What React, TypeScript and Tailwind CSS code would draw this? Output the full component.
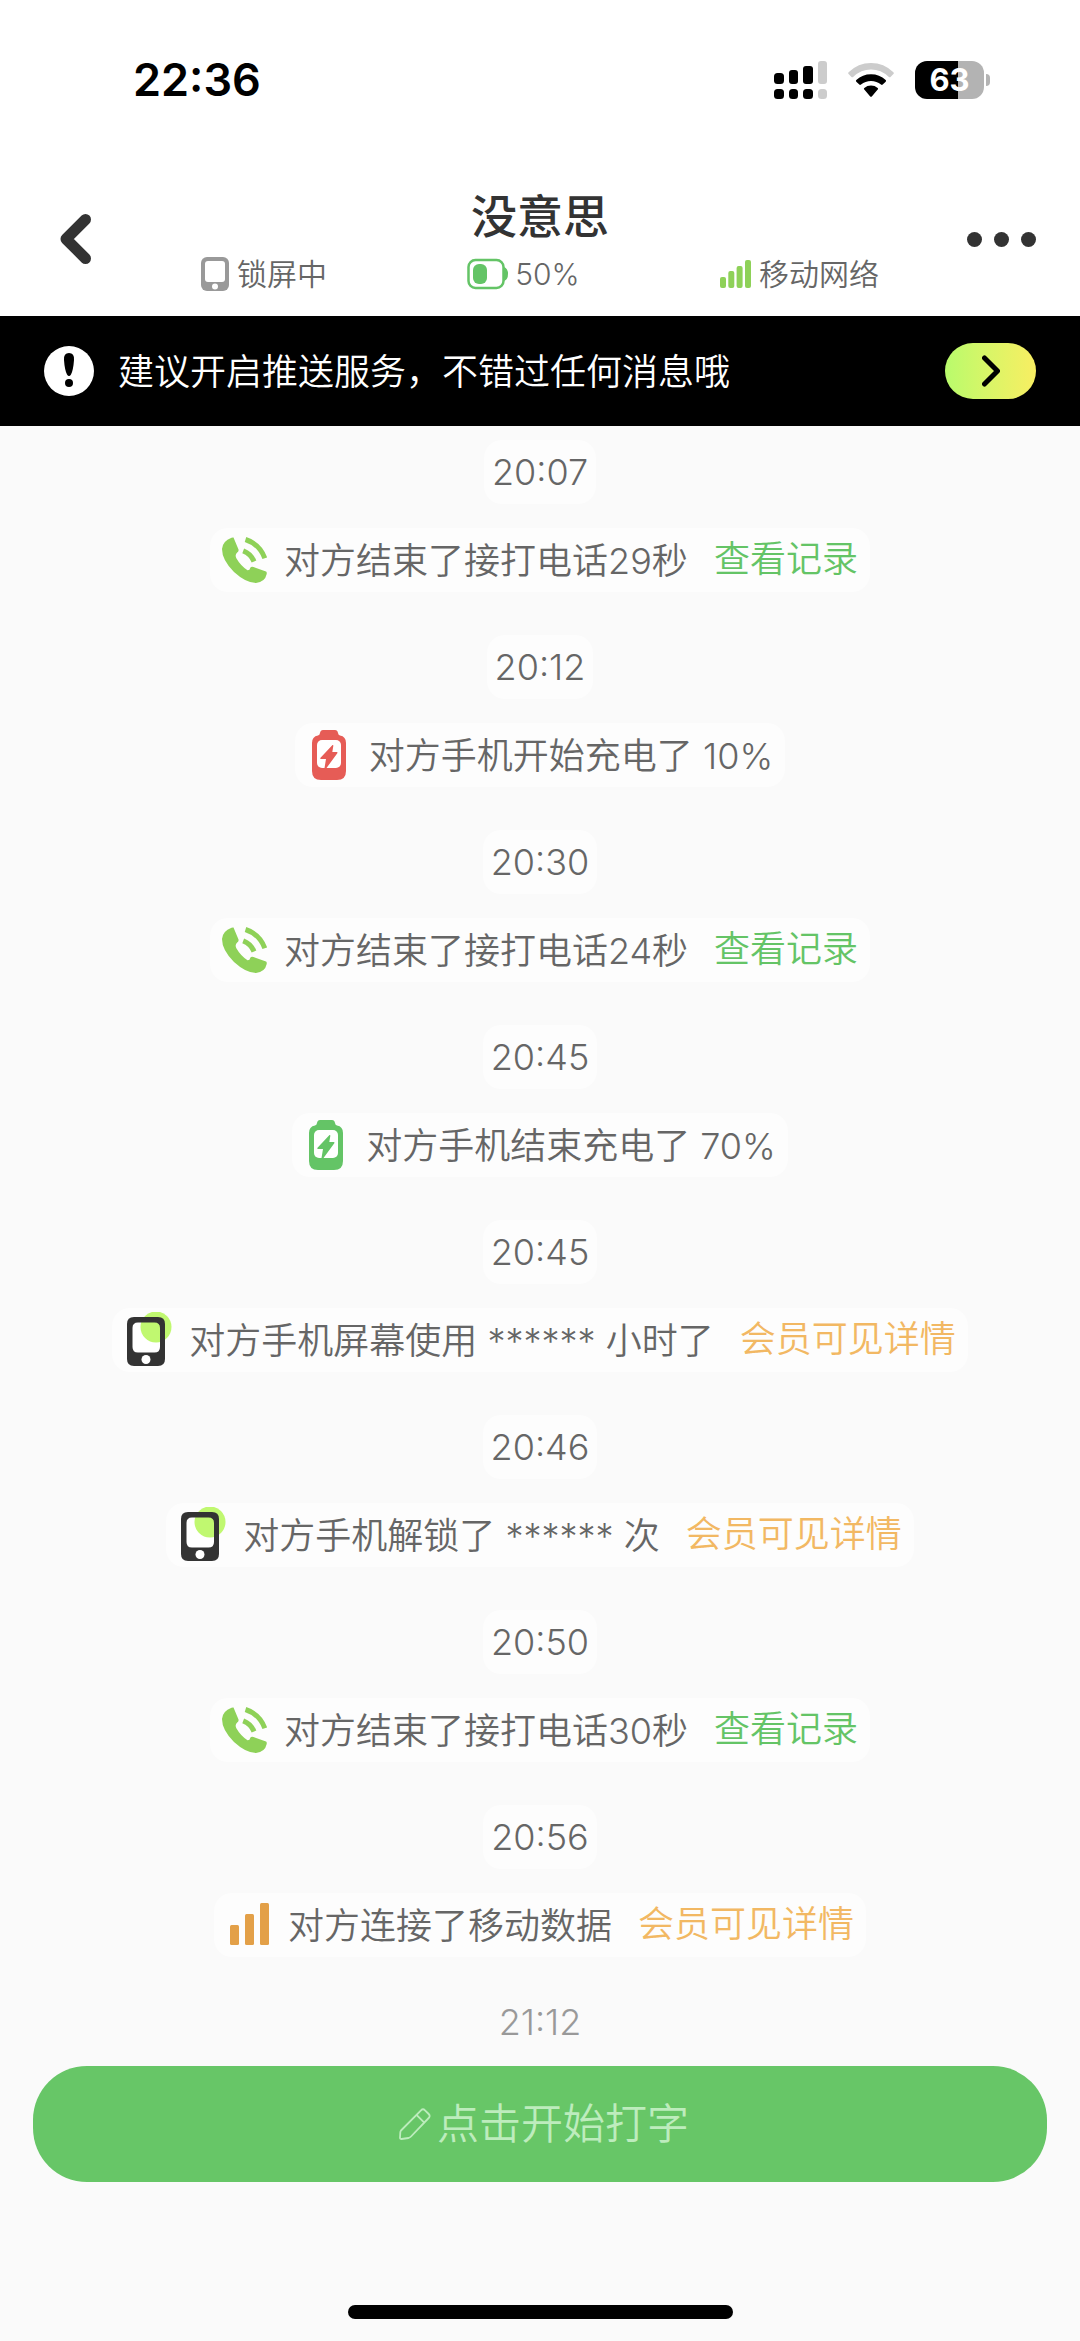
import type { ReactNode } from "react";

type EventKind = "call" | "chargeStart" | "chargeEnd" | "screen" | "signal";

interface EventItem {
  time: string;
  kind: EventKind;
  text: string;
  action?: string;
  vip?: boolean;
}

const EVENTS: EventItem[] = [
  { time: "20:07", kind: "call", text: "对方结束了接打电话29秒", action: "查看记录" },
  { time: "20:12", kind: "chargeStart", text: "对方手机开始充电了 10%" },
  { time: "20:30", kind: "call", text: "对方结束了接打电话24秒", action: "查看记录" },
  { time: "20:45", kind: "chargeEnd", text: "对方手机结束充电了 70%" },
  { time: "20:45", kind: "screen", text: "对方手机屏幕使用 ****** 小时了", action: "会员可见详情", vip: true },
  { time: "20:46", kind: "screen", text: "对方手机解锁了 ****** 次", action: "会员可见详情", vip: true },
  { time: "20:50", kind: "call", text: "对方结束了接打电话30秒", action: "查看记录" },
  { time: "20:56", kind: "signal", text: "对方连接了移动数据", action: "会员可见详情", vip: true },
];

function CallIcon() {
  return (
    <svg viewBox="0 0 46 46" className="w-[46px] h-[46px]" fill="none" aria-hidden="true">
      <path
        d="M12.5.5L17.5 12.5Q18 14 16.2 15.5Q13.5 18 15.5 21.5Q19.5 28.5 26.5 33.3Q28.8 33.5 29.3 30.8Q30.2 29.3 32.5 30L45 34.5Q46 35 45.7 37Q44 45 35 46Q25 46 13 35Q1 23 1 12Q1.5 4 10.5.7Q12 .2 12.5.5Z"
        fill="#8ed158"
      />
      <path d="M24.5 2.5Q38.5 7 43.8 21.2" stroke="#8ed158" strokeWidth="5" />
      <path d="M22.2 13.8Q30 16.8 33 24.5" stroke="#8ed158" strokeWidth="5" />
    </svg>
  );
}

function ChargeIcon({ color }: { color: string }) {
  return (
    <svg viewBox="0 0 46 50" className="w-[46px] h-[50px]" aria-hidden="true">
      <path
        d="M17 0H29Q31.5 0 32 3Q32.3 5 34 5.5Q40 6.5 40 13V41Q40 50 31 50H15Q6 50 6 41V13Q6 6.5 12 5.5Q13.7 5 14 3Q14.5 0 17 0Z"
        fill={color}
      />
      <rect x="11" y="10" width="24" height="28" rx="5" fill="#fff" />
      <path d="M26.5 15Q27.5 14.5 27.3 16L26.3 22H31Q31.8 22.3 31.3 23.3L20.5 38H18.5L20 29H14.8Q13.8 28.7 14.5 27.7Z" fill={color} />
    </svg>
  );
}

function ScreenIcon() {
  return (
    <svg viewBox="-3 1 49 56" className="w-[49px] h-[56px]" aria-hidden="true">
      <rect x="4" y="9" width="33" height="38" rx="6" fill="#fff" />
      <circle cx="30" cy="16" r="15.5" fill="#c0f870" />
      <path
        fillRule="evenodd"
        fill="#333"
        d="M9 6H32Q39 6 39 13V48Q39 55 32 55H8Q1 55 1 48V13Q1 6 8 6ZM12 11.5Q6.5 11.5 6.5 17V36Q6.5 41.5 12 41.5H28.5Q34 41.5 34 36V17Q34 11.5 28.5 11.5Z"
      />
      <circle cx="20" cy="48.5" r="4.5" fill="#fff" />
    </svg>
  );
}

function SignalIcon() {
  return (
    <svg viewBox="0 0 46 46" className="w-[46px] h-[46px]" fill="#e3a048" aria-hidden="true">
      <rect x="5" y="23" width="9" height="20" rx="1.5" />
      <rect x="20" y="12" width="9" height="31" rx="1.5" />
      <rect x="35" y="1" width="9" height="42" rx="1.5" />
    </svg>
  );
}

const ICONS: Record<EventKind, ReactNode> = {
  call: <CallIcon />,
  chargeStart: <ChargeIcon color="#e65c56" />,
  chargeEnd: <ChargeIcon color="#64c466" />,
  screen: <ScreenIcon />,
  signal: <SignalIcon />,
};

function StatusBar() {
  return (
    <div className="flex h-40 items-center justify-between pl-[133px] pr-[90px] text-black">
      <span className="text-[45px] leading-[56px] font-semibold">22:36</span>
      <div className="flex items-center">
        <svg viewBox="0 0 54 38" className="mr-5 h-[38px] w-[54px]" aria-hidden="true">
          <rect x="0" y="12" width="10" height="11" rx="3.5" />
          <rect x="15" y="9" width="9" height="14" rx="3" />
          <rect x="29" y="5" width="10" height="18" rx="3" />
          <rect x="44" y="0" width="9" height="23" rx="3" fill="#ccc" />
          <rect x="0" y="28" width="10" height="10" rx="3.5" />
          <rect x="15" y="28" width="9" height="10" rx="3.5" />
          <rect x="29" y="28" width="10" height="10" rx="3.5" />
          <rect x="44" y="28" width="9" height="10" rx="3.5" fill="#ccc" />
        </svg>
        <svg viewBox="0 0 46 34" className="mr-[21px] h-[34px] w-[46px]" aria-hidden="true">
          <path d="M.6 9.3Q10 0 23 0T45.4 9.3Q46.2 10.2 45.4 11L42.5 13.9Q41.7 14.6 40.9 13.9Q33 6.5 23 6.5T5.1 13.9Q4.3 14.6 3.5 13.9L.6 11Q-.2 10.2.6 9.3Z" fill="#ccc" />
          <path d="M8.3 17Q14.5 11.3 23 11.3T37.7 17Q38.5 17.9 37.7 18.7L34.7 21.6Q33.9 22.4 33 21.6Q28.7 17.9 23 17.9T13 21.6Q12.1 22.4 11.3 21.6L8.3 18.7Q7.5 17.9 8.3 17Z" />
          <path d="M16.3 25Q19.2 22.6 23 22.6T29.7 25Q30.5 25.8 29.7 26.6L23.8 33.4Q23 34.2 22.2 33.4L16.3 26.6Q15.5 25.8 16.3 25Z" />
        </svg>
        <div className="flex h-[38px] w-[69px] items-center justify-center rounded-[12px] bg-[linear-gradient(90deg,#000_63%,#b3b3b3_63%)] text-[31px] leading-[38px] font-bold text-white">
          63
        </div>
        <div className="ml-[2px] h-3 w-1 rounded-r-full bg-[#b3b3b3]" />
      </div>
    </div>
  );
}

function Header() {
  return (
    <header className="flex items-center px-11 pt-[26px] pb-6">
      <button type="button" aria-label="返回" className="flex w-[72px] justify-start pl-4 text-[#333]">
        <svg viewBox="0 0 31 50" className="h-[50px] w-[31px]" fill="none" stroke="currentColor" strokeWidth="11" strokeLinecap="round" strokeLinejoin="round" aria-hidden="true">
          <path d="M25.5 5.5L6 25L25.5 44.5" />
        </svg>
      </button>
      <div className="flex-1 px-[85px]">
        <h1 className="text-center text-[46px] leading-[60px] font-medium text-[#333]">没意思</h1>
        <div className="mt-[10px] flex h-9 items-center justify-between text-[30px] leading-9 font-[350] text-[#666]">
          <div className="flex items-center gap-2">
            <svg viewBox="0 0 28 34" className="h-[34px] w-7" aria-hidden="true">
              <rect x="0" y="0" width="28" height="34" rx="6" fill="#999" />
              <rect x="4" y="4" width="20" height="21" rx="3" fill="#fff" />
              <circle cx="14" cy="29.5" r="3" fill="#fff" />
            </svg>
            <span>锁屏中</span>
          </div>
          <div className="flex items-center gap-[6px]">
            <svg viewBox="0 0 42 32" className="h-8 w-[42px]" aria-hidden="true">
              <rect x="1.5" y="2" width="35" height="28" rx="7" fill="none" stroke="#64c466" strokeWidth="2.5" />
              <rect x="6" y="6" width="14" height="20" rx="6" fill="#64c466" />
              <path d="M37 9Q41 10.5 41 16T37 23Z" fill="#64c466" />
            </svg>
            <span>50%</span>
          </div>
          <div className="flex items-center gap-2">
            <svg viewBox="0 0 31 28" className="h-7 w-[31px]" fill="#8ed158" aria-hidden="true">
              <rect x="0" y="17" width="6" height="11" rx="2" />
              <rect x="8.3" y="11" width="6" height="17" rx="2" />
              <rect x="16.6" y="6" width="6" height="22" rx="2" />
              <rect x="25" y="0" width="6" height="28" rx="2" />
            </svg>
            <span>移动网络</span>
          </div>
        </div>
      </div>
      <button type="button" aria-label="更多" className="flex w-[72px] items-center justify-end gap-3">
        <span className="size-[15px] rounded-full bg-[#333]" />
        <span className="size-[15px] rounded-full bg-[#333]" />
        <span className="size-[15px] rounded-full bg-[#333]" />
      </button>
    </header>
  );
}

function PushBanner() {
  return (
    <section className="flex h-[110px] items-center bg-black px-11 text-white">
      <svg viewBox="0 0 50 50" className="size-[50px]" aria-hidden="true">
        <circle cx="25" cy="25" r="25" fill="#fff" />
        <path d="M25 7Q30.5 7 30 14Q29.3 24 27 28.5Q25 31.5 23 28.5Q20.7 24 20 14Q19.5 7 25 7Z" />
        <circle cx="25" cy="37" r="4" />
      </svg>
      <p className="ml-6 flex-1 pt-[2px] text-[36px] leading-[50px] font-[350]">建议开启推送服务，不错过任何消息哦</p>
      <button
        type="button"
        aria-label="开启推送"
        className="flex h-14 w-[91px] items-center justify-center rounded-full bg-linear-to-r from-[#b8fb6c] to-[#f8ee62]"
      >
        <svg viewBox="0 0 18 32" className="h-8 w-[18px]" fill="none" stroke="#000" strokeWidth="5" strokeLinecap="round" strokeLinejoin="round" aria-hidden="true">
          <path d="M2.5 3L15.5 16L2.5 29" />
        </svg>
      </button>
    </section>
  );
}

function EventRow({ item }: { item: EventItem }) {
  return (
    <li className="flex flex-col items-center gap-6">
      <time className="flex h-16 items-center rounded-[18px] bg-[#fdfdfd] px-2">{item.time}</time>
      <div className="flex h-16 items-center rounded-[18px] bg-[#fdfdfd] pr-3 pl-[11px]">
        {ICONS[item.kind]}
        <span className="ml-[17px] pt-[2px]">{item.text}</span>
        {item.action && (
          <a href="#" className={item.vip ? "ml-[26px] pb-[2px] text-[#f2b863]" : "ml-[26px] pb-[2px] text-[#64c466]"}>
            {item.action}
          </a>
        )}
      </div>
    </li>
  );
}

export default function App() {
  return (
    <div lang="zh-CN" className="flex min-h-screen flex-col bg-[#fafafa] font-[Inter,'Noto_Sans_CJK_SC',sans-serif]">
      <div className="bg-white">
        <StatusBar />
        <Header />
      </div>
      <PushBanner />

      <main className="flex-1 pt-[14px] text-[36px] leading-[50px] font-[350] text-[#666]">
        <ul className="flex flex-col gap-[43px]">
          {EVENTS.map((item, i) => (
            <EventRow key={i} item={item} />
          ))}
        </ul>
        <time className="mt-[33px] flex h-16 items-center justify-center text-[#999]">21:12</time>
      </main>

      <footer className="flex flex-col items-center px-[33px] pt-3 pb-[22px]">
        <button
          type="button"
          className="flex h-[116px] w-full items-center justify-center gap-[6px] rounded-[54px] bg-[#67c667] pl-2 text-[42px] leading-[56px] font-[350] text-[#bdecbd]"
        >
          <svg viewBox="0 0 32 32" className="size-8" fill="none" stroke="currentColor" strokeWidth="1.8" strokeLinejoin="round" aria-hidden="true">
            <path d="M2 22.5L22 2.3Q24 .3 26 2.3L29.7 6Q31.7 8 29.7 10L12 28.5Q11 29.5 9.5 30L2.5 31Q.8 31 1 29.5L1.3 24.5Q1.3 23.3 2 22.5Z" />
            <path d="M17.5 6.8L25.5 14.8" />
          </svg>
          <span>点击开始打字</span>
        </button>
        <div className="mt-[123px] h-[14px] w-[385px] rounded-full bg-black" />
      </footer>
    </div>
  );
}
